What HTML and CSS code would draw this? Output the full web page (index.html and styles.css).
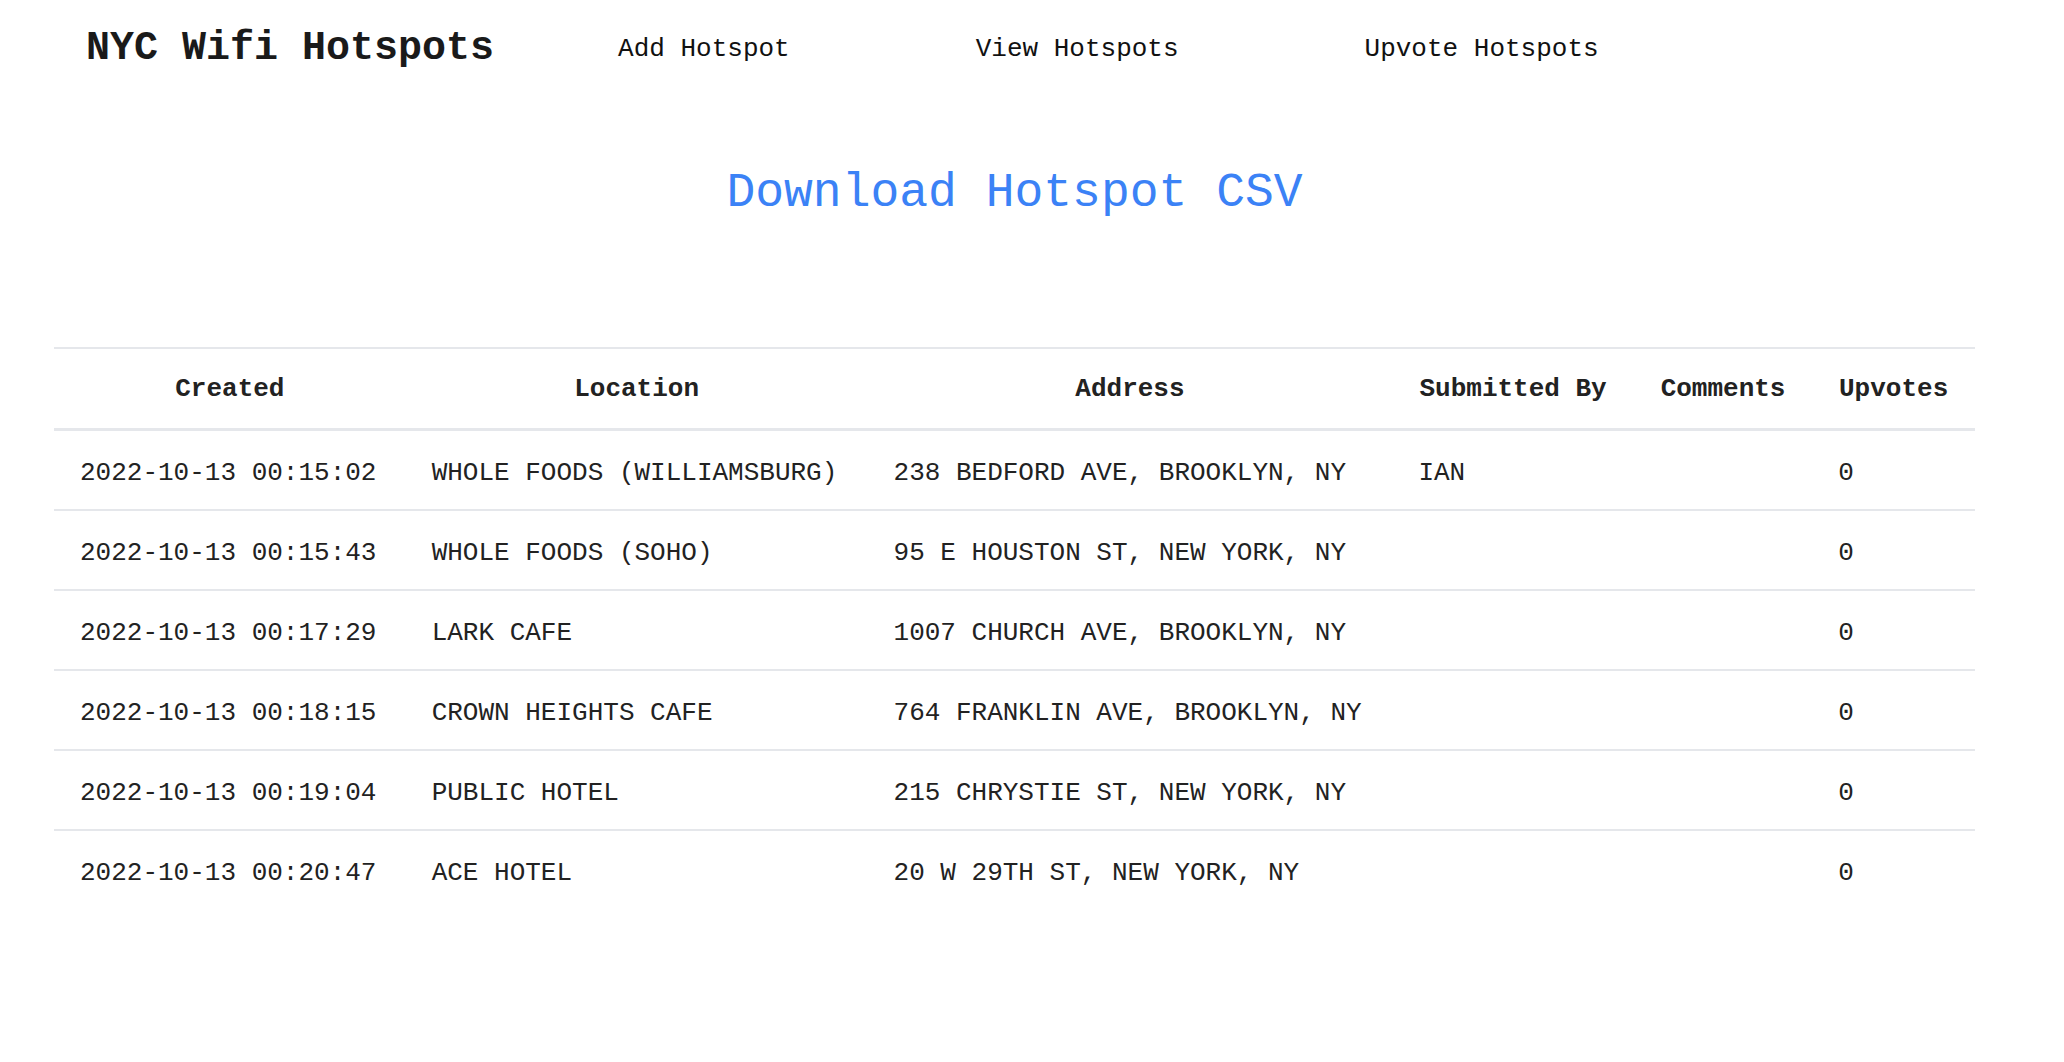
FILE: index.html
```html
<!DOCTYPE html>
<html lang="en">
<head>
<meta charset="utf-8">
<title>NYC Wifi Hotspots</title>
<link rel="stylesheet" href="styles.css">
</head>
<body>
<header class="topbar">
  <a class="brand" href="#">NYC Wifi Hotspots</a>
  <nav class="nav">
    <a class="nav-link" href="#">Add Hotspot</a>
    <a class="nav-link" href="#">View Hotspots</a>
    <a class="nav-link" href="#">Upvote Hotspots</a>
  </nav>
</header>
<main class="content">
  <div class="download-wrap">
    <a class="download" href="#">Download Hotspot CSV</a>
  </div>
  <table class="hotspots">
    <thead>
      <tr>
        <th>Created</th>
        <th>Location</th>
        <th>Address</th>
        <th>Submitted By</th>
        <th>Comments</th>
        <th>Upvotes</th>
      </tr>
    </thead>
    <tbody>
      <tr><td>2022-10-13 00:15:02</td><td>WHOLE FOODS (WILLIAMSBURG)</td><td>238 BEDFORD AVE, BROOKLYN, NY</td><td>IAN</td><td></td><td>0</td></tr>
      <tr><td>2022-10-13 00:15:43</td><td>WHOLE FOODS (SOHO)</td><td>95 E HOUSTON ST, NEW YORK, NY</td><td></td><td></td><td>0</td></tr>
      <tr><td>2022-10-13 00:17:29</td><td>LARK CAFE</td><td>1007 CHURCH AVE, BROOKLYN, NY</td><td></td><td></td><td>0</td></tr>
      <tr><td>2022-10-13 00:18:15</td><td>CROWN HEIGHTS CAFE</td><td>764 FRANKLIN AVE, BROOKLYN, NY</td><td></td><td></td><td>0</td></tr>
      <tr><td>2022-10-13 00:19:04</td><td>PUBLIC HOTEL</td><td>215 CHRYSTIE ST, NEW YORK, NY</td><td></td><td></td><td>0</td></tr>
      <tr><td>2022-10-13 00:20:47</td><td>ACE HOTEL</td><td>20 W 29TH ST, NEW YORK, NY</td><td></td><td></td><td>0</td></tr>
    </tbody>
  </table>
</main>
</body>
</html>
```
FILE: styles.css
```css
* { box-sizing: border-box; }

html, body {
  margin: 0;
  padding: 0;
  background: #ffffff;
}

body {
  font-family: "Liberation Mono", "Courier New", monospace;
  color: #1f1f1f;
}

a { text-decoration: none; color: inherit; }

.topbar {
  display: flex;
  align-items: center;
  padding: 26px 0 0 86px;
}

.brand {
  font-size: 40px;
  font-weight: 700;
  color: #1a1a1a;
  margin-right: 124px;
}

.nav {
  display: flex;
  gap: 186px;
}

.nav-link {
  font-size: 26px;
  color: #111111;
}

.content {
  padding: 0 89px 0 54px;
}

.download-wrap {
  text-align: center;
  padding-top: 95px;
  margin-bottom: 127px;
}

.download {
  font-size: 48px;
  color: #3b82f6;
}

.hotspots {
  width: 100%;
  border-collapse: collapse;
  font-size: 26px;
  color: #222222;
}

.hotspots thead tr {
  border-top: 2px solid #e5e7eb;
  border-bottom: 3px solid #e5e7eb;
}

.hotspots th {
  font-weight: 700;
  text-align: center;
  padding: 21px 26px 19px;
  line-height: 39px;
  white-space: nowrap;
}

.hotspots td {
  text-align: left;
  padding: 22.5px 26px 16.5px;
  line-height: 39px;
  white-space: nowrap;
}

.hotspots tbody tr {
  border-bottom: 2px solid #e5e7eb;
}

.hotspots tbody tr:last-child {
  border-bottom: none;
}
```
